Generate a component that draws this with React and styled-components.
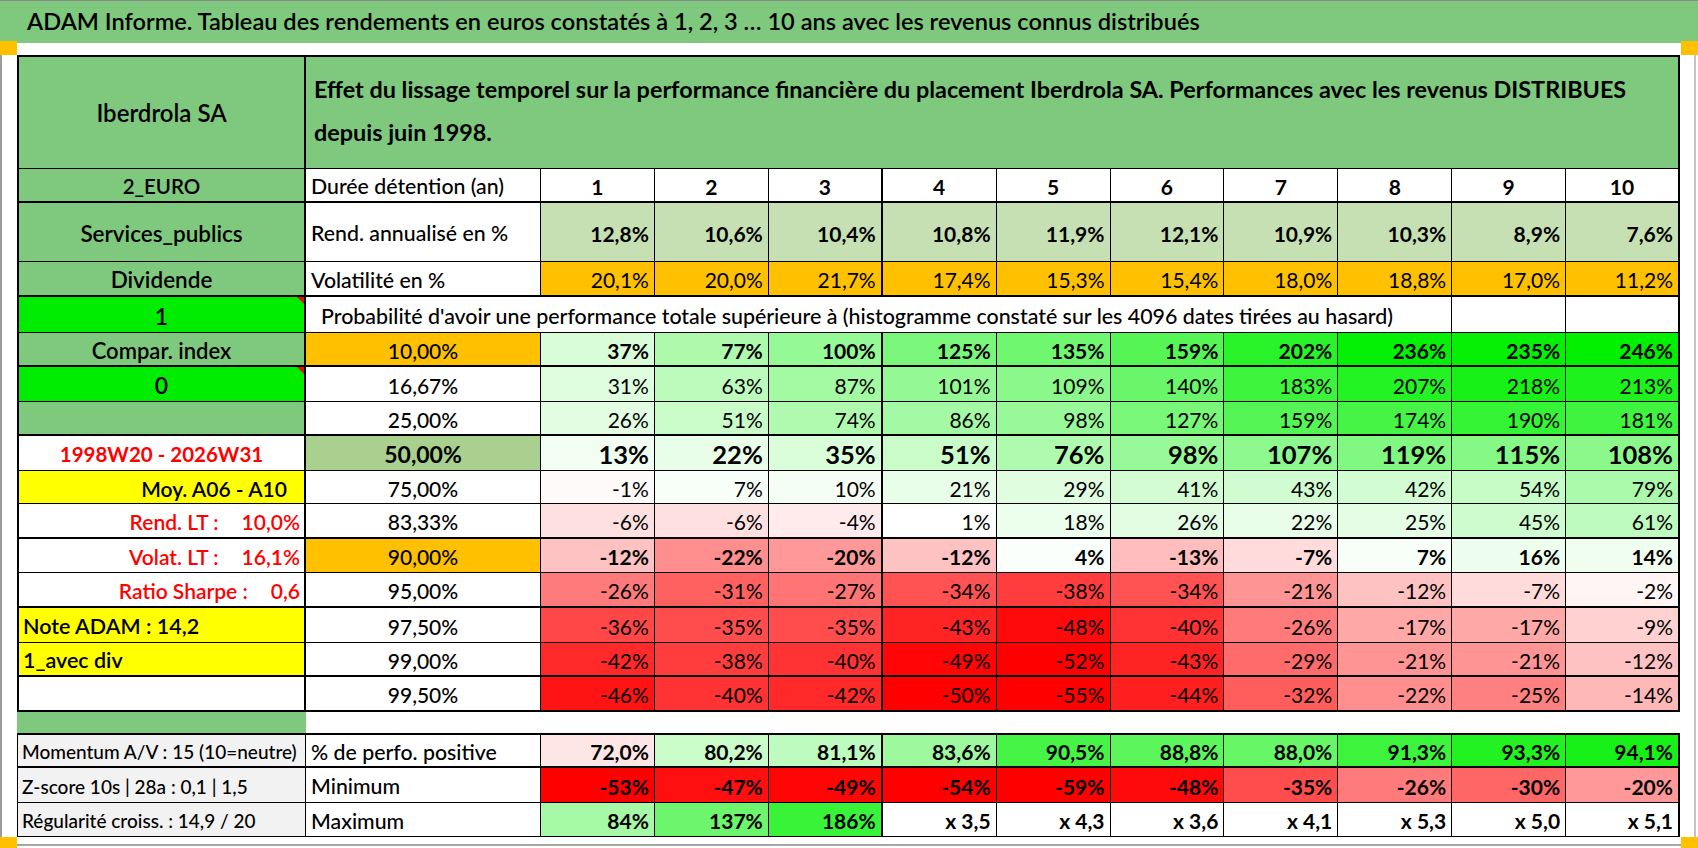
import React from 'react';
import styled, { createGlobalStyle, css } from 'styled-components';

const C = {
  green: '#7fc97f',
  bright: '#00ec00',
  olive: '#c6e0b4',
  orange: '#ffc000',
  mid: '#a9d08e',
  yellow: '#ffff00',
  red: '#ff0000',
  gray: '#f2f2f2',
};

const FONT = `Lato, "Open Sans", "Liberation Sans", sans-serif`;

const GlobalStyle = createGlobalStyle`
  html, body { margin: 0; padding: 0; background: #fff; }
  body { font-family: ${FONT}; color: #000; }
  #root { width: 1698px; height: 848px; overflow: hidden; }
`;

const Page = styled.div`
  width: 1698px;
  height: 848px;
  display: flex;
  flex-direction: column;
  background: #fff;
`;

const TitleBar = styled.header`
  box-sizing: border-box;
  flex: none;
  height: 43px;
  background: ${C.green};
  border-top: 1px solid #8a8a8a;
  display: flex;
  align-items: center;
  padding: 0 0 2px 27px;
  font-size: 23.6px;
  font-weight: 600;
  white-space: nowrap;
`;

const Sheet = styled.main`
  position: relative;
  box-sizing: border-box;
  width: 1696px;
  padding: 12px 14px 7px 15px;
  border-left: 2px solid #9c9c9c;
  border-right: 2px solid #c4c4c4;
  border-bottom: 2px solid #a6a6a6;
`;

const Handle = styled.span`
  position: absolute;
  width: 17px;
  height: ${(p) => p.$h}px;
  background: ${C.orange};
  ${(p) => (p.$top ? 'top: -2px;' : 'bottom: -4px;')}
  ${(p) => (p.$left ? 'left: -2px;' : 'right: -4px;')}
`;

const Grid = styled.section`
  display: grid;
  grid-template-columns: ${(p) => p.$first}px 235px repeat(10, 1fr);
  grid-template-rows: ${(p) => p.$rows};
  border-top: 2px solid #000;
  border-left: ${(p) => p.$lb}px solid #000;
`;

const Cell = styled.div`
  position: relative;
  box-sizing: border-box;
  min-width: 0;
  display: flex;
  align-items: center;
  white-space: nowrap;
  background: ${(p) => p.$bg || '#fff'};
  border-right: ${(p) => p.$r ?? 1}px solid #000;
  border-bottom: ${(p) => p.$b ?? 1}px solid #000;
  ${(p) => p.$span && css`grid-column: span ${p.$span};`}
`;

const HeadSide = styled(Cell)`
  justify-content: center;
  font-size: 24px;
  font-weight: 600;
`;

const HeadTitle = styled(Cell)`
  padding: 0 8px 4px;
  font-size: 23.4px;
  font-weight: 700;
  line-height: 43px;
  white-space: normal;
`;

const SideCell = styled(Cell)`
  justify-content: ${(p) =>
    p.$align === 'left' ? 'flex-start' : p.$align === 'right' ? 'flex-end' : 'center'};
  padding: 2px ${(p) => p.$pr ?? 4}px 0 4px;
  gap: 23px;
  font-size: ${(p) => p.$size || 21}px;
  font-weight: 600;
  color: ${(p) => p.$color || '#000'};
`;

const Flag = styled.span`
  position: absolute;
  top: 0;
  right: 0;
  border-style: solid;
  border-width: 0 7px 7px 0;
  border-color: transparent #e01010 transparent transparent;
`;

const RowHead = styled(Cell)`
  justify-content: flex-start;
  padding: 2px 4px 0 5px;
  font-size: 21.3px;
  font-weight: 500;
`;

const PctCell = styled(Cell)`
  justify-content: center;
  padding-top: 2px;
  font-size: ${(p) => (p.$big ? 23 : 21)}px;
  font-weight: ${(p) => (p.$bold ? 700 : 500)};
`;

const YearCell = styled(Cell)`
  justify-content: center;
  padding-top: 2px;
  font-size: 20.5px;
  font-weight: 700;
  color: ${C.red};
`;

const ValueCell = styled(Cell)`
  justify-content: flex-end;
  padding: 2px 5px 0 0;
  font-size: ${(p) => (p.$big ? 25.5 : 21)}px;
  font-weight: ${(p) => (p.$bold ? 700 : 400)};
`;

const ProbCell = styled(Cell)`
  justify-content: flex-start;
  padding: 2px 0 0 15px;
  font-size: 21.4px;
  font-weight: 500;
`;

const Spacer = styled.div`
  height: 21px;
  display: flex;
`;

const SpacerBlock = styled.div`
  width: 289px;
  background: ${C.green};
`;

const StatLabel = styled(Cell)`
  justify-content: flex-start;
  padding: 2px 4px 0 4px;
  font-size: 19px;
  font-weight: 500;
  background: ${C.gray};
`;

function mix(t, target) {
  const [r, g, b] = target;
  const f = (c) => Math.round(255 + (c - 255) * t);
  return `rgb(${f(r)},${f(g)},${f(b)})`;
}

function heat(v) {
  if (v >= 0) return mix(Math.min(v / 240, 1), [0, 240, 0]);
  return mix(Math.min(-v / 50, 1), [255, 0, 0]);
}

function perfoHeat(v) {
  if (v >= 76) return mix(Math.min((v - 76) / 20, 1), [0, 240, 0]);
  return mix(Math.min((76 - v) / 40, 1), [255, 0, 0]);
}

const years = ['1', '2', '3', '4', '5', '6', '7', '8', '9', '10'];
const rend = ['12,8%', '10,6%', '10,4%', '10,8%', '11,9%', '12,1%', '10,9%', '10,3%', '8,9%', '7,6%'];
const vol = ['20,1%', '20,0%', '21,7%', '17,4%', '15,3%', '15,4%', '18,0%', '18,8%', '17,0%', '11,2%'];

const pctRows = [
  { pct: '10,00%', pctBg: C.orange, bold: true, b: 2, side: { text: 'Compar. index', bg: C.green, size: 22 }, v: [37, 77, 100, 125, 135, 159, 202, 236, 235, 246] },
  { pct: '16,67%', side: { text: '0', bg: C.bright, flag: true, size: 23 }, v: [31, 63, 87, 101, 109, 140, 183, 207, 218, 213] },
  { pct: '25,00%', b: 2, side: { text: '', bg: C.green }, v: [26, 51, 74, 86, 98, 127, 159, 174, 190, 181] },
  { pct: '50,00%', pctBg: C.mid, bold: true, big: true, side: { year: '1998W20 - 2026W31' }, v: [13, 22, 35, 51, 76, 98, 107, 119, 115, 108] },
  { pct: '75,00%', side: { text: 'Moy. A06 - A10', bg: C.yellow, align: 'right', pr: 17 }, v: [-1, 7, 10, 21, 29, 41, 43, 42, 54, 79] },
  { pct: '83,33%', b: 2, side: { pair: ['Rend. LT :', '10,0%'], color: C.red }, v: [-6, -6, -4, 1, 18, 26, 22, 25, 45, 61] },
  { pct: '90,00%', pctBg: C.orange, bold: true, side: { pair: ['Volat. LT :', '16,1%'], color: C.red }, v: [-12, -22, -20, -12, 4, -13, -7, 7, 16, 14] },
  { pct: '95,00%', b: 2, side: { pair: ['Ratio Sharpe :', '0,6'], color: C.red }, v: [-26, -31, -27, -34, -38, -34, -21, -12, -7, -2] },
  { pct: '97,50%', side: { text: 'Note ADAM : 14,2', bg: C.yellow, align: 'left', size: 21.5 }, v: [-36, -35, -35, -43, -48, -40, -26, -17, -17, -9] },
  { pct: '99,00%', b: 2, side: { text: '1_avec div', bg: C.yellow, align: 'left', size: 21.5 }, v: [-42, -38, -40, -49, -52, -43, -29, -21, -21, -12] },
  { pct: '99,50%', b: 2, side: { text: '' }, v: [-46, -40, -42, -50, -55, -44, -32, -22, -25, -14] },
];

const perfo = [72.0, 80.2, 81.1, 83.6, 90.5, 88.8, 88.0, 91.3, 93.3, 94.1];
const mins = [-53, -47, -49, -54, -59, -48, -35, -26, -30, -20];
const maxs = [84, 137, 186, 'x 3,5', 'x 4,3', 'x 3,6', 'x 4,1', 'x 5,3', 'x 5,0', 'x 5,1'];

const colRight = (i) => (i === 2 || i === 9 ? 2 : 1);
const fmt1 = (n) => n.toFixed(1).replace('.', ',') + '%';

function Side({ side, b }) {
  if (side.year) {
    return (
      <YearCell $r={2} $b={b}>
        {side.year}
      </YearCell>
    );
  }
  if (side.pair) {
    return (
      <SideCell $r={2} $b={b} $color={side.color} $align="right">
        <span>{side.pair[0]}</span>
        <span>{side.pair[1]}</span>
      </SideCell>
    );
  }
  return (
    <SideCell $r={2} $b={b} $bg={side.bg} $align={side.align} $pr={side.pr} $size={side.size}>
      {side.text}
      {side.flag && <Flag />}
    </SideCell>
  );
}

export default function App() {
  return (
    <Page>
      <GlobalStyle />
      <TitleBar>
        ADAM Informe. Tableau des rendements en euros constatés à 1, 2, 3 … 10 ans avec les revenus connus distribués
      </TitleBar>
      <Sheet>
        <Handle $top $left $h={14} />
        <Handle $top $h={14} />
        <Handle $left $h={11} />
        <Handle $h={11} />

        <Grid $first={287} $lb={2} $rows="112px 34px 59px 35px 36px 34px 35px 34px 35px 33px 35px 34px 35px 35px 34px 35px">
          <HeadSide $bg={C.green} $r={2}>Iberdrola SA</HeadSide>
          <HeadTitle $bg={C.green} $r={2} $span={11}>
            Effet du lissage temporel sur la performance financière du placement Iberdrola SA. Performances avec les revenus DISTRIBUES
            <br />
            depuis juin 1998.
          </HeadTitle>

          <SideCell $bg={C.green} $r={2} $b={2} $size={20.5}>2_EURO</SideCell>
          <RowHead $b={2}>Durée détention (an)</RowHead>
          {years.map((y, i) => (
            <PctCell key={y} $bold $b={2} $r={colRight(i)}>{y}</PctCell>
          ))}

          <SideCell $bg={C.green} $r={2} $size={22.5}>Services_publics</SideCell>
          <RowHead>Rend. annualisé en %</RowHead>
          {rend.map((v, i) => (
            <ValueCell key={i} $bg={C.olive} $bold $r={colRight(i)}>{v}</ValueCell>
          ))}

          <SideCell $bg={C.green} $r={2} $b={2} $size={22.5}>Dividende</SideCell>
          <RowHead $b={2}>Volatilité en %</RowHead>
          {vol.map((v, i) => (
            <ValueCell key={i} $bg={C.orange} $b={2} $r={colRight(i)}>{v}</ValueCell>
          ))}

          <SideCell $bg={C.bright} $r={2} $size={23}>
            1
            <Flag />
          </SideCell>
          <ProbCell $span={9}>
            Probabilité d'avoir une performance totale supérieure à (histogramme constaté sur les 4096 dates tirées au hasard)
          </ProbCell>
          <ValueCell />
          <ValueCell $r={2} />

          {pctRows.map((row) => (
            <React.Fragment key={row.pct}>
              <Side side={row.side} b={row.b} />
              <PctCell $bg={row.pctBg} $bold={row.big} $big={row.big} $b={row.b}>{row.pct}</PctCell>
              {row.v.map((v, i) => (
                <ValueCell key={i} $bg={heat(v)} $bold={row.bold} $big={row.big} $b={row.b} $r={colRight(i)}>
                  {v}%
                </ValueCell>
              ))}
            </React.Fragment>
          ))}
        </Grid>

        <Spacer>
          <SpacerBlock />
        </Spacer>

        <Grid $first={288} $lb={1} $rows="33px 35px 34px">
          <StatLabel $b={2}>Momentum A/V : 15 (10=neutre)</StatLabel>
          <RowHead $b={2}>% de perfo. positive</RowHead>
          {perfo.map((v, i) => (
            <ValueCell key={i} $bg={perfoHeat(v)} $bold $b={2} $r={colRight(i)}>{fmt1(v)}</ValueCell>
          ))}

          <StatLabel>Z-score 10s | 28a : 0,1 | 1,5</StatLabel>
          <RowHead>Minimum</RowHead>
          {mins.map((v, i) => (
            <ValueCell key={i} $bg={heat(v)} $bold $r={colRight(i)}>{v}%</ValueCell>
          ))}

          <StatLabel>Régularité croiss. : 14,9 / 20</StatLabel>
          <RowHead>Maximum</RowHead>
          {maxs.map((v, i) => (
            <ValueCell key={i} $bg={typeof v === 'number' ? heat(v) : '#fff'} $bold $r={colRight(i)}>
              {typeof v === 'number' ? `${v}%` : v}
            </ValueCell>
          ))}
        </Grid>
      </Sheet>
    </Page>
  );
}
